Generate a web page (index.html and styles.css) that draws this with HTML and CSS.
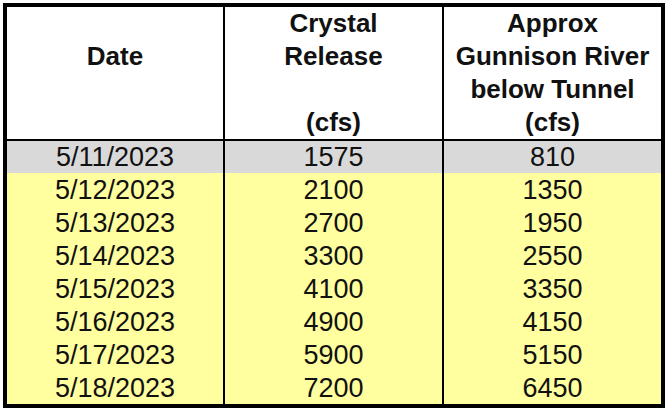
FILE: index.html
```html
<!DOCTYPE html>
<html>
<head>
<meta charset="utf-8">
<link rel="stylesheet" href="styles.css">
</head>
<body>
<div class="sheet">
  <div class="row head">
    <div class="cell"><span></span><span>Date</span><span></span><span></span></div>
    <div class="cell"><span>Crystal</span><span>Release</span><span></span><span>(cfs)</span></div>
    <div class="cell"><span>Approx</span><span>Gunnison River</span><span>below Tunnel</span><span>(cfs)</span></div>
  </div>
  <div class="row data gray"><div class="cell">5/11/2023</div><div class="cell">1575</div><div class="cell">810</div></div>
  <div class="row data"><div class="cell">5/12/2023</div><div class="cell">2100</div><div class="cell">1350</div></div>
  <div class="row data"><div class="cell">5/13/2023</div><div class="cell">2700</div><div class="cell">1950</div></div>
  <div class="row data"><div class="cell">5/14/2023</div><div class="cell">3300</div><div class="cell">2550</div></div>
  <div class="row data"><div class="cell">5/15/2023</div><div class="cell">4100</div><div class="cell">3350</div></div>
  <div class="row data"><div class="cell">5/16/2023</div><div class="cell">4900</div><div class="cell">4150</div></div>
  <div class="row data"><div class="cell">5/17/2023</div><div class="cell">5900</div><div class="cell">5150</div></div>
  <div class="row data"><div class="cell">5/18/2023</div><div class="cell">7200</div><div class="cell">6450</div></div>
</div>
</body>
</html>
```
FILE: styles.css
```css
html, body {
  margin: 0;
  padding: 0;
  background: #ffffff;
}
body {
  font-family: "Liberation Sans", Arial, sans-serif;
  color: #111111;
}
.sheet {
  margin: 3px 0 0 3px;
  width: 654px;
  border: 4px solid #000000;
  background: #000000;
}
.row {
  display: grid;
  grid-template-columns: 216px 217px 217px;
  column-gap: 2px;
}
.head {
  border-bottom: 2px solid #000000;
}
.head .cell {
  background: #ffffff;
  display: flex;
  flex-direction: column;
  align-items: center;
  font-weight: bold;
  font-size: 26px;
}
.head .cell span {
  height: 33px;
  line-height: 33px;
  white-space: nowrap;
}
.data .cell {
  background: #ffff9f;
  height: 33px;
  line-height: 35px;
  text-align: center;
  font-size: 27px;
}
.data.gray .cell {
  background: #d9d9d9;
  height: 32px;
  line-height: 33px;
}
```
